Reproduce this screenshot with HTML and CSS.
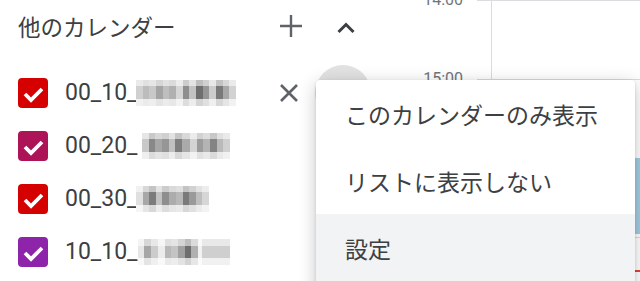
FILE: index.html
```html
<!DOCTYPE html>
<html lang="ja">

<head>
  <meta charset="UTF-8">
  <meta name="viewport" content="width=device-width, initial-scale=1.0">
  <title>他のカレンダー</title>

  <link rel="stylesheet" href="styles.css">
</head>

<body>
  <div class="page">
    <!-- side panel -->
    <aside class="sidebar">
      <div class="section-head">
        <span class="section-title">他のカレンダー</span>
        <span class="icon-btn add">
          <svg width="24" height="24" viewBox="0 0 24 24"><path d="M12 1v22M1 12h22" /></svg>
        </span>
        <span class="icon-btn collapse">
          <svg width="24" height="24" viewBox="0 0 24 24"><path d="M4.5 17L12 9.5 19.5 17" /></svg>
        </span>
      </div>

      <ul class="calendars">
        <li class="calendar">
          <span class="check red"><svg width="30" height="30" viewBox="0 0 30 30"><path d="M7 16l6 6 11-11" /></svg></span>
          <span class="cal-name">00_10_</span><span class="blur blur-1"></span>
          <span class="remove">
            <svg width="22" height="22" viewBox="0 0 22 22"><path d="M3 3l16 16M19 3L3 19" /></svg>
          </span>
          <span class="more"></span>
        </li>
        <li class="calendar">
          <span class="check berry"><svg width="30" height="30" viewBox="0 0 30 30"><path d="M7 16l6 6 11-11" /></svg></span>
          <span class="cal-name">00_20_</span><span class="blur blur-2"></span>
        </li>
        <li class="calendar">
          <span class="check red"><svg width="30" height="30" viewBox="0 0 30 30"><path d="M7 16l6 6 11-11" /></svg></span>
          <span class="cal-name">00_30_</span><span class="blur blur-3"></span>
        </li>
        <li class="calendar">
          <span class="check grape"><svg width="30" height="30" viewBox="0 0 30 30"><path d="M7 16l6 6 11-11" /></svg></span>
          <span class="cal-name">10_10_</span><span class="blur blur-4"></span>
        </li>
      </ul>
    </aside>

    <!-- time axis -->
    <div class="times">
      <div class="time">14:00</div>
      <div class="time">15:00</div>
      <div class="time">16:00</div>
      <div class="time">17:00</div>
    </div>

    <!-- day grid -->
    <div class="grid">
      <div class="day">
        <div class="event"></div>
        <div class="now"></div>
      </div>
    </div>

    <!-- calendar options menu -->
    <div class="menu">
      <div class="menu-item">このカレンダーのみ表示</div>
      <div class="menu-item">リストに表示しない</div>
      <div class="menu-item active">設定</div>
    </div>
  </div>
</body>

</html>
```

FILE: styles.css
```css
/* document */
* {
  box-sizing: border-box;
}

body {
  margin: 0;
  font-family: Roboto, "Noto Sans CJK JP", sans-serif;
  color: #3c4043;
  background: #fff;
}

.page {
  position: relative;
  display: flex;
  width: 640px;
  height: 281px;
  overflow: hidden;
}

/* side panel */
.sidebar {
  flex: none;
  width: 410px;
}

.section-head {
  display: flex;
  align-items: center;
  height: 52px;
  padding: 0 52px 0 18px;
}

.section-title {
  flex: 1;
  font-size: 22.5px;
  color: #3c4043;
}

.icon-btn {
  display: flex;
  width: 24px;
  height: 24px;
}

.icon-btn path {
  fill: none;
  stroke-width: 2.4;
}

.add path {
  stroke: #5f6368;
}

.collapse {
  margin-left: 31px;
  margin-top: 2px;
}

.collapse path {
  stroke: #3c4043;
  stroke-width: 3;
}

/* calendar list */
.calendars {
  list-style: none;
  margin: 0;
  padding: 14px 39px 0 18px;
}

.calendar {
  display: flex;
  align-items: center;
  height: 53px;
}

.check {
  flex: none;
  display: flex;
  width: 30px;
  height: 30px;
  margin-right: 17px;
  border-radius: 4px;
}

.check path {
  fill: none;
  stroke: #fff;
  stroke-width: 3.8;
}

.check.red {
  background: #d50000;
}

.check.berry {
  background: #ad1457;
}

.check.grape {
  background: #8e24aa;
}

.cal-name {
  font-size: 23px;
  color: #3c4043;
}

/* pixelated names */
.blur {
  display: inline-block;
  height: 26px;
  margin-left: -1px;
  background-image:
    linear-gradient(to bottom, rgba(255, 255, 255, .55) 0 25%, rgba(255, 255, 255, 0) 25% 75%, rgba(255, 255, 255, .7) 75%),
    var(--cols);
}

.blur-1 {
  width: 100px;
  --cols: linear-gradient(90deg, #d0d0d0 0 7%, #bcbcbc 7% 13%, #c8c8c8 13% 20%, #a4a4a4 20% 27%, #bebebe 27% 33%, #b0b0b0 33% 40%, #d6d6d6 40% 47%, #8e8e8e 47% 53%, #c2c2c2 53% 60%, #6e6e6e 60% 67%, #969696 67% 73%, #cccccc 73% 80%, #7a7a7a 80% 87%, #a8a8a8 87% 93%, #d2d2d2 93% 100%);
}

.blur-2 {
  width: 88px;
  margin-left: 5px;
  --cols: linear-gradient(90deg, #c8c8c8 0 8%, #888888 8% 15%, #a6a6a6 15% 23%, #969696 23% 31%, #c0c0c0 31% 38%, #7e7e7e 38% 46%, #aaaaaa 46% 54%, #d4d4d4 54% 62%, #9c9c9c 62% 69%, #b4b4b4 69% 77%, #848484 77% 85%, #bababa 85% 92%, #d0d0d0 92% 100%);
}

.blur-3 {
  width: 73px;
  --cols: linear-gradient(90deg, #e0e0e0 0 9%, #a8a8a8 9% 18%, #7c7c7c 18% 27%, #c2c2c2 27% 36%, #8e8e8e 36% 45%, #acacac 45% 55%, #b8b8b8 55% 64%, #7a7a7a 64% 73%, #9a9a9a 73% 82%, #bebebe 82% 91%, #d6d6d6 91% 100%);
}

.blur-4 {
  width: 92px;
  margin-left: 1px;
  --cols: linear-gradient(90deg, #e6e6e6 0 7%, #a6a6a6 7% 14%, #cccccc 14% 22%, #ececec 22% 29%, #b8b8b8 29% 36%, #c4c4c4 36% 44%, #a0a0a0 44% 51%, #6e6e6e 51% 58%, #b0b0b0 58% 65%, #f2f2f2 65% 70%, #cfcfcf 70% 100%);
}

.remove {
  display: flex;
  margin-left: auto;
  width: 22px;
  height: 22px;
}

.remove path {
  fill: none;
  stroke: #5f6368;
  stroke-width: 2.6;
}

.more {
  flex: none;
  width: 56px;
  height: 56px;
  margin-left: 15px;
  border-radius: 50%;
  background: #e2e2e2;
}

/* time axis */
.times {
  flex: none;
  width: 67px;
  margin-top: -10px;
  padding-right: 14px;
  text-align: right;
  font-size: 16px;
  color: #70757a;
}

.time {
  height: 79px;
  line-height: 20px;
}

/* day grid */
.grid {
  flex: 1;
  background: repeating-linear-gradient(to bottom, #dadce0 0 1px, transparent 1px 79px);
}

.day {
  position: relative;
  height: 100%;
  margin-left: 14px;
  border-left: 1px solid #dadce0;
}

.event {
  position: absolute;
  top: 158px;
  left: 2px;
  right: 0;
  height: 76px;
  border-radius: 4px 0 0 4px;
  background: #a1cde3;
}

.now {
  position: absolute;
  top: 270px;
  left: 0;
  right: 0;
  height: 2px;
  background: #ea4335;
}

/* options menu */
.menu {
  position: absolute;
  left: 316px;
  top: 80px;
  width: 319px;
  height: 220px;
  border-radius: 4px;
  background: #fff;
  box-shadow: 0 4px 18px rgba(0, 0, 0, .22), 0 1px 3px rgba(0, 0, 0, .14);
}

.menu-item {
  display: flex;
  align-items: center;
  height: 67px;
  padding-left: 29px;
  font-size: 23px;
  color: #3c4043;
}

.menu-item.active {
  background: #f1f3f4;
}
```
